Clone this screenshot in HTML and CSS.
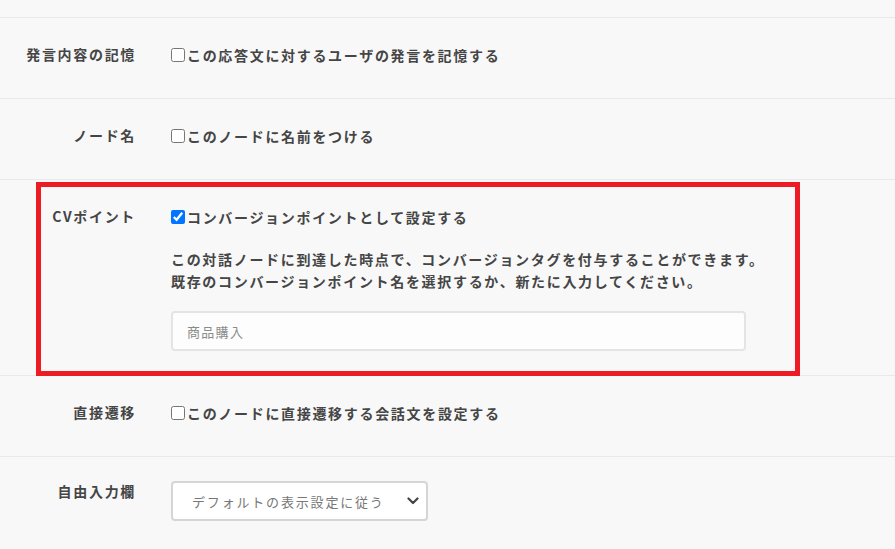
FILE: index.html
```html
<!DOCTYPE html>
<html lang="ja">

<head>
    <meta charset="UTF-8">
    <meta name="viewport" content="width=device-width, initial-scale=1.0">
    <title>ノード設定</title>
    <link rel="stylesheet" href="styles.css">
</head>

<body>
    <div class="settings">
        <div class="row row-top"></div>

        <div class="row">
            <div class="label">発言内容の記憶</div>
            <div class="field">
                <label class="check"><input type="checkbox">この応答文に対するユーザの発言を記憶する</label>
            </div>
        </div>

        <div class="row">
            <div class="label">ノード名</div>
            <div class="field">
                <label class="check"><input type="checkbox">このノードに名前をつける</label>
            </div>
        </div>

        <div class="row row-cv">
            <div class="label">CVポイント</div>
            <div class="field">
                <label class="check"><input type="checkbox" checked>コンバージョンポイントとして設定する</label>
                <p class="note">この対話ノードに到達した時点で、コンバージョンタグを付与することができます。<br>既存のコンバージョンポイント名を選択するか、新たに入力してください。</p>
                <input class="text-input" type="text" placeholder="商品購入">
            </div>
            <div class="highlight"></div>
        </div>

        <div class="row">
            <div class="label">直接遷移</div>
            <div class="field">
                <label class="check"><input type="checkbox">このノードに直接遷移する会話文を設定する</label>
            </div>
        </div>

        <div class="row row-select">
            <div class="label">自由入力欄</div>
            <div class="field">
                <div class="select-wrap">
                    <select class="select">
                        <option>デフォルトの表示設定に従う</option>
                        <option>表示する</option>
                        <option>表示しない</option>
                    </select>
                    <svg class="chevron" width="12" height="8" viewBox="0 0 12 8">
                        <path d="M1.5 1.5 L6 6 L10.5 1.5" fill="none" stroke="#444" stroke-width="2.2" stroke-linecap="round" stroke-linejoin="round"/>
                    </svg>
                </div>
            </div>
        </div>
    </div>
</body>

</html>
```

FILE: styles.css
```css
body {
    margin: 0;
    background-color: #f8f8f8;
    font-family: "Noto Sans CJK JP", "Noto Sans", sans-serif;
    font-size: 14px;
    font-weight: 700;
    color: #454545;
    letter-spacing: 0.12em;
}

.settings {
    width: 100%;
}

.row {
    display: flex;
    border-bottom: 1px solid #e9e9e9;
    padding: 26px 0 32px;
    line-height: 22px;
}

.row-top {
    height: 17px;
    padding: 0;
}

.row-cv {
    position: relative;
    padding-bottom: 24px;
}

.row-select {
    padding: 24px 0 28px;
    border-bottom: none;
}

.label {
    width: 136px;
    flex-shrink: 0;
    text-align: right;
    margin-top: -1px;
}

.field {
    margin-left: 35px;
}

.check {
    display: flex;
    align-items: center;
    white-space: nowrap;
}

.check input {
    width: 14px;
    height: 14px;
    margin: 0 2px 0 0;
    accent-color: #0075ff;
}

.note {
    margin: 20px 0 0;
    white-space: nowrap;
}

.text-input {
    display: block;
    box-sizing: border-box;
    width: 575px;
    height: 40px;
    margin-top: 19px;
    padding: 0 14px;
    border: 2px solid #e4e4e4;
    border-radius: 4px;
    background-color: #fdfdfd;
    font-family: inherit;
    font-size: 13px;
    font-weight: 400;
    letter-spacing: 0.1em;
    color: #555;
}

.text-input::placeholder {
    color: #8a8a8a;
}

.highlight {
    position: absolute;
    left: 36px;
    right: 95px;
    top: 2px;
    bottom: -1px;
    border: 5px solid #ed1c24;
    pointer-events: none;
}

.select-wrap {
    position: relative;
    width: 257px;
}

.select {
    display: block;
    box-sizing: border-box;
    width: 257px;
    height: 40px;
    padding: 0 30px 0 19px;
    border: 2px solid #d5d5d5;
    border-radius: 4px;
    background-color: #fff;
    appearance: none;
    font-family: inherit;
    font-size: 13px;
    font-weight: 400;
    letter-spacing: 0.14em;
    color: #777;
}

.chevron {
    position: absolute;
    right: 9px;
    top: 16px;
}
```
